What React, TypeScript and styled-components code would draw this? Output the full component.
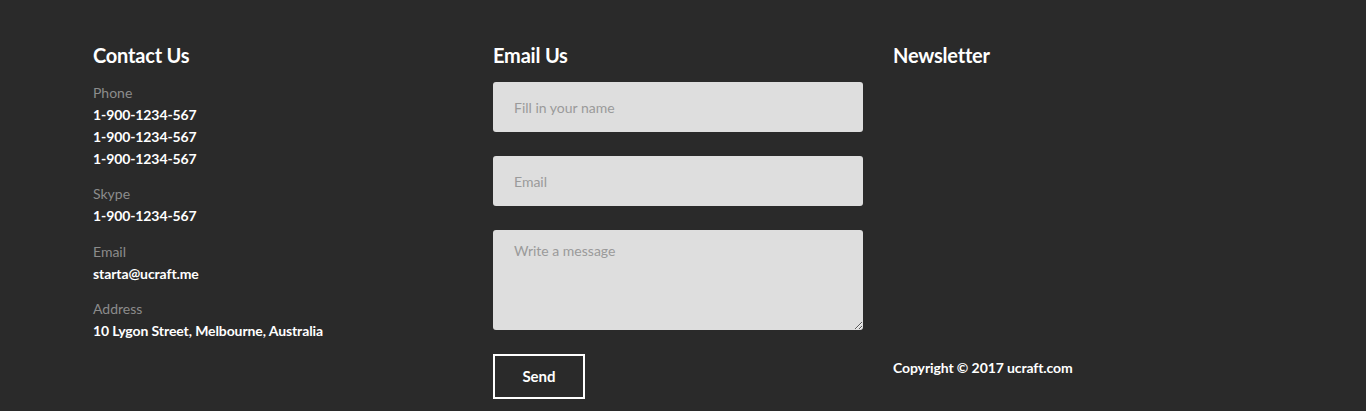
import React from "react";
import styled, { createGlobalStyle } from "styled-components";

const Global = createGlobalStyle`
  html, body { margin: 0; padding: 0; background: #2a2a2a; }
  body { font-family: Lato, "Open Sans", sans-serif; -webkit-font-smoothing: antialiased; }
  * { box-sizing: border-box; }
`;

const Footer = styled.footer`
  background: #2a2a2a;
  min-height: 411px;
  padding: 43px 0 12px;
`;

const Container = styled.div`
  width: 1200px;
  margin: 0 auto;
  display: grid;
  grid-template-columns: repeat(3, 400px);
`;

const Column = styled.div`
  padding: 0 10px;
  display: flex;
  flex-direction: column;
`;

const Heading = styled.h3<{ $gap: number }>`
  margin: 0 0 ${(p) => p.$gap}px;
  font-size: 20px;
  line-height: 24px;
  font-weight: 700;
  color: #fff;
  letter-spacing: -0.2px;
`;

const Group = styled.div<{ $first?: boolean }>`
  margin-top: ${(p) => (p.$first ? "0" : "13.4px")};
`;

const Label = styled.div`
  font-size: 14px;
  line-height: 22px;
  color: #8c8c8c;
`;

const Value = styled.div`
  font-size: 14px;
  line-height: 22px;
  font-weight: 700;
  color: #fff;
  letter-spacing: -0.1px;
`;

const Form = styled.form`
  display: flex;
  flex-direction: column;
  gap: 24px;
`;

const Input = styled.input`
  width: 370px;
  height: 50px;
  border: none;
  border-radius: 3px;
  background: #dedede;
  padding: 0 21px;
  font-family: Lato, sans-serif;
  font-size: 14px;
  color: #333;
  outline: none;
  &::placeholder { color: #9a9a9a; }
`;

const TextArea = styled.textarea`
  width: 370px;
  height: 100px;
  border: none;
  border-radius: 3px;
  background: #dedede;
  padding: 12px 21px;
  font-family: Lato, sans-serif;
  font-size: 14px;
  line-height: 18px;
  color: #333;
  outline: none;
  resize: vertical;
  display: block;
  &::placeholder { color: #9a9a9a; }
`;

const SendButton = styled.button`
  width: 92px;
  height: 45px;
  background: transparent;
  border: 2px solid #fff;
  color: #fff;
  font-family: Lato, sans-serif;
  font-size: 15px;
  font-weight: 700;
  cursor: pointer;
  padding: 0 0 1px;
  display: block;
`;

const Copyright = styled.div`
  margin-top: auto;
  margin-bottom: 21px;
  font-size: 14px;
  line-height: 20px;
  font-weight: 700;
  color: #fff;
  letter-spacing: -0.1px;
`;

const groups = [
  { label: "Phone", values: ["1-900-1234-567", "1-900-1234-567", "1-900-1234-567"] },
  { label: "Skype", values: ["1-900-1234-567"] },
  { label: "Email", values: ["starta@ucraft.me"] },
  { label: "Address", values: ["10 Lygon Street, Melbourne, Australia"] },
];

export default function App() {
  return (
    <>
      <Global />
      <Footer>
        <Container>
          <Column>
            <Heading $gap={15}>Contact Us</Heading>
            {groups.map((g, i) => (
              <Group key={g.label} $first={i === 0}>
                <Label>{g.label}</Label>
                {g.values.map((v, j) => (
                  <Value key={j}>{v}</Value>
                ))}
              </Group>
            ))}
          </Column>
          <Column>
            <Heading $gap={15}>Email Us</Heading>
            <Form onSubmit={(e) => e.preventDefault()}>
              <Input placeholder="Fill in your name" />
              <Input placeholder="Email" />
              <TextArea placeholder="Write a message" />
              <div>
                <SendButton type="submit">Send</SendButton>
              </div>
            </Form>
          </Column>
          <Column>
            <Heading $gap={15}>Newsletter</Heading>
            <Copyright>Copyright © 2017 ucraft.com</Copyright>
          </Column>
        </Container>
      </Footer>
    </>
  );
}
